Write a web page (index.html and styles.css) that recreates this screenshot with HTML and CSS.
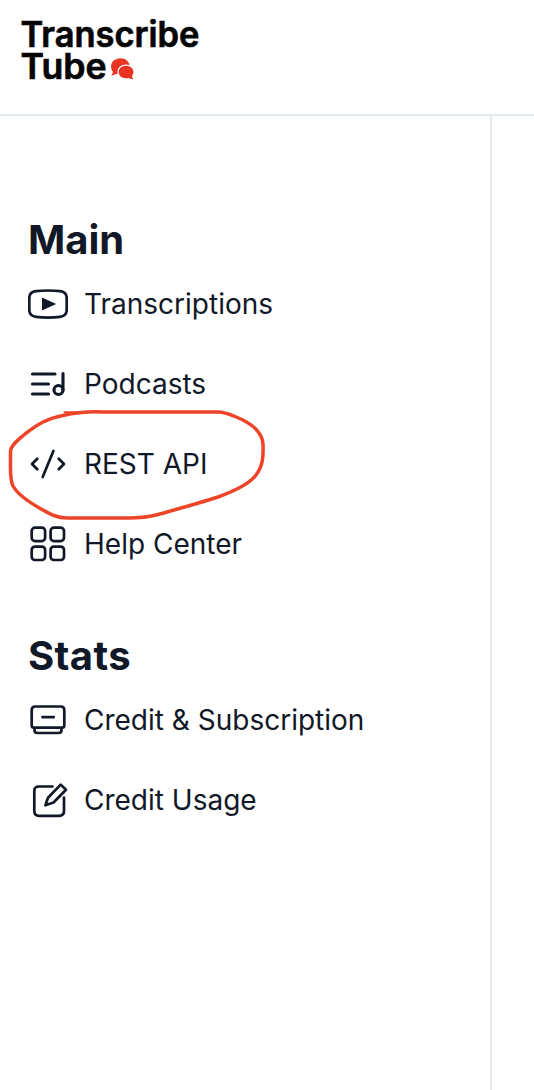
FILE: index.html
```html
<!DOCTYPE html>
<html lang="en">
<head>
<meta charset="utf-8">
<title>Transcribe Tube</title>
<link rel="stylesheet" href="styles.css">
</head>
<body>
<header class="header">
  <svg class="logo" viewBox="0 0 200 80" role="img" aria-label="Transcribe Tube">
    <text x="-0.5" y="38.800" textLength="179" lengthAdjust="spacingAndGlyphs">Transcribe</text>
    <text x="-0.5" y="71" textLength="86" lengthAdjust="spacingAndGlyphs">Tube</text>
    <g class="bubbles">
      <path d="M99.300 50.300c5.200 0 9.300 3.400 9.300 7.900s-4.100 8.200-9.300 8.200c-1.300 0-2.600-.2-3.700-.6-1.400.9-3.300 1.700-5.500 1.600 1-1 1.700-2.300 1.700-3.700-1.100-1.400-1.700-3.300-1.700-5.300 0-4.500 4-8.100 9.200-8.100z"/>
      <path class="bubble-front" d="M105 57.800c4.300 0 7.400 2.700 7.400 6.300 0 1.500-.5 2.800-1.400 3.900 0 1.200.5 2.300 1.500 3.100-1.900.1-3.500-.4-4.800-1.200-.9.300-1.800.4-2.800.4-4.300 0-7.200-2.700-7.200-6.200 0-3.600 3-6.300 7.300-6.300z"/>
    </g>
  </svg>
</header>
<div class="layout">
  <nav class="sidebar">
    <section class="group">
      <h2 class="heading">Main</h2>
      <a class="item"><svg class="icon" viewBox="0 0 40 40"><path d="M8 7.200Q20 5.800 32 7.200Q38.700 8 38.700 14V26Q38.700 32 32 32.900Q20 34.500 8 32.900Q1.300 32 1.300 26V14Q1.300 8 8 7.200z"/><path class="solid" d="M14 13.400 28.200 20 14 26.500z"/></svg><span>Transcriptions</span></a>
      <a class="item"><svg class="icon bold" viewBox="0 0 40 40"><path d="M4.500 10H27M4.500 20H20.500M4.500 30H20.500M35 9.500V26"/><circle cx="30.500" cy="26" r="4.500"/></svg><span>Podcasts</span></a>
      <a class="item marked"><svg class="icon" viewBox="0 0 40 40"><path d="M9.300 14.700 4 20l5.300 5.300M30.700 14.700 36 20l-5.300 5.300M25.400 7 14.700 33"/></svg><span>REST API</span>
        <svg class="mark" viewBox="0 0 280 130"><path class="pen-stroke" d="M102 12H218C224 12 229 14 235 16.500C249 22 262 30 263 44C263.500 56 263 66 256 75C251 82 240 89 218 97C200 103 174 110 158 114.500C146 118 138 118 128 118H67C57 118 50 114 43 110C32 104 18 95 13 86C10 80 10.500 72 10.500 64V51C11 45 18 40 25 34C39 23 48 18.500 63 15.500C76 12.500 85 11.300 102 12"/><path class="pen-tail" d="M64.500 12.300H90"/></svg>
      </a>
      <a class="item"><svg class="icon" viewBox="0 0 40 40"><rect x="3.700" y="3.700" width="13.400" height="13.400" rx="3.300"/><rect x="22.600" y="3.700" width="13.400" height="13.400" rx="3.300"/><rect x="3.700" y="22.600" width="13.400" height="13.400" rx="3.300"/><rect x="22.600" y="22.600" width="13.400" height="13.400" rx="3.300"/></svg><span>Help Center</span></a>
    </section>
    <section class="group">
      <h2 class="heading wide">Stats</h2>
      <a class="item"><svg class="icon" viewBox="0 0 40 40"><path d="M7.300 6.500H32.700Q36.300 6.500 36.300 10V25.500Q36.300 27.700 34 27.700H6Q3.700 27.700 3.700 25.500V10Q3.700 6.500 7.300 6.500zM14.500 17.200H25.700M6.500 28V30Q6.500 33 9.500 33H30.500Q33.500 33 33.500 30V28"/></svg><span>Credit &amp; Subscription</span></a>
      <a class="item"><svg class="icon" viewBox="0 0 40 40"><path d="M24.500 6.500H11Q6.300 6.500 6.300 11V31Q6.300 35.800 11 35.800H31Q36 35.800 36 31V17.500M17.400 25.300 20 17.800 32.700 4.600 38 9.700 25.500 22.500z"/></svg><span>Credit Usage</span></a>
    </section>
  </nav>
</div>
</body>
</html>
```
FILE: styles.css
```css
* { box-sizing: border-box; }
body {
  margin: 0;
  min-height: 1090px;
  display: flex;
  flex-direction: column;
  background: #fff;
  color: #111827;
  font-family: Inter, "Liberation Sans", sans-serif;
}
.header {
  height: 116px;
  padding: 8px 21px;
  border-bottom: 2px solid #e2e8f0;
}
.logo { display: block; width: 200px; height: 80px; overflow: visible; }
.logo text {
  font-family: Inter, sans-serif;
  font-size: 35.500px;
  font-weight: 600;
  fill: #050505;
  stroke: #050505;
  stroke-width: .7;
}
.bubbles { fill: #e93424; }
.bubble-front { stroke: #fff; stroke-width: 2.600; paint-order: stroke; }
.layout { flex: 1; display: flex; }
.sidebar {
  width: 492px;
  padding: 96px 28px 0;
  border-right: 2px solid #e5e7eb;
}
.group { margin-bottom: 44px; }
.heading {
  margin: 0;
  height: 52px;
  font-size: 40px;
  line-height: 56px;
  font-weight: 700;
}
.heading.wide { letter-spacing: .4px; }
.item {
  position: relative;
  display: flex;
  align-items: center;
  gap: 16px;
  height: 80px;
  font-size: 28px;
  white-space: nowrap;
}
.icon {
  flex: none;
  width: 40px;
  height: 40px;
  fill: none;
  stroke: currentColor;
  stroke-width: 2.7;
  stroke-linecap: round;
  stroke-linejoin: round;
}
.icon.bold { stroke-width: 3.1; }
.icon .solid { fill: currentColor; stroke: none; }
.mark {
  position: absolute;
  left: -28px;
  top: -24px;
  width: 280px;
  height: 130px;
  fill: none;
  stroke: #ee4529;
  stroke-linecap: round;
  pointer-events: none;
}
.pen-stroke { stroke-width: 3.500; }
.pen-tail { stroke-width: 2; }
```
